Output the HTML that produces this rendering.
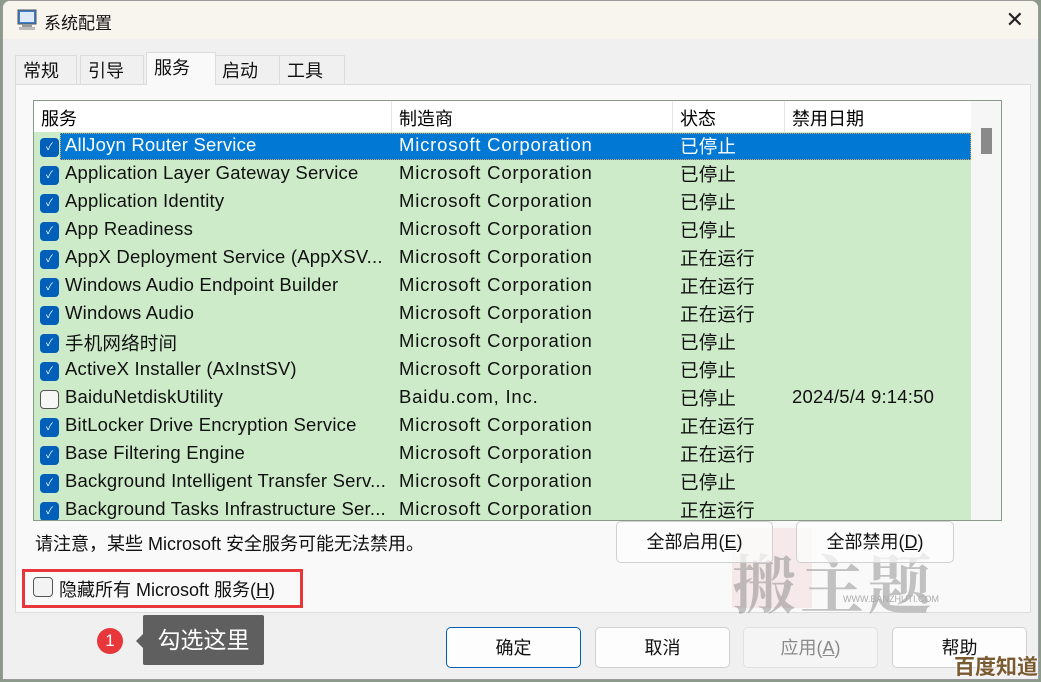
<!DOCTYPE html>
<html><head><meta charset="utf-8"><style>
*{margin:0;padding:0;box-sizing:border-box}
body{width:1041px;height:682px;overflow:hidden;background:#8c9a8c;font-family:"Liberation Sans","Noto Sans CJK SC",sans-serif;position:relative}
.win{position:absolute;left:2px;top:0;width:1037px;height:680px;background:#f0f0f0;border:1px solid #9a9a9a;border-radius:8px 8px 0 0;overflow:hidden}
.title{position:absolute;left:0;top:0;width:100%;height:38px;background:#f8f5ef}
.title span{position:absolute;left:41px;top:8px;font-size:17px;color:#111}
.x{position:absolute;right:14px;top:6px;font-size:22px;color:#222}
.tab{position:absolute;top:54px;height:30px;background:#f0f0f0;border:1px solid #dcdcdc;border-bottom:none;font-size:18px;padding:1px 0 0 7px;color:#111}
.panel{position:absolute;left:12px;top:83px;width:1016px;height:529px;background:#f9f9f9;border:1px solid #dcdcdc}
.list{position:absolute;left:33px;top:100px;width:969px;height:421px;border:1px solid #8a9a8a;background:#cdebc9;overflow:hidden}
.hdr{position:absolute;left:0;top:0;width:937px;height:31px;background:#fff}
.hdr div{position:absolute;top:0;height:31px;border-right:1px solid #e5e5e5;font-size:18px;padding:4px 0 0 7px}
.sb{position:absolute;left:937px;top:0;width:31px;height:421px;background:#f6f6f6}
.thumb{position:absolute;left:10px;top:27px;width:11px;height:26px;background:#8a8a8a}
.row{position:absolute;left:0;width:937px;height:28px;font-size:18.5px;color:#111;letter-spacing:0.2px}
.row span{position:absolute;top:1px;white-space:nowrap}
.row span.m{letter-spacing:0.8px}
.row span.s{top:0}
.cb{position:absolute;left:6px;top:5px;width:19px;height:19px;border-radius:4px;background:#005fb8;color:#fff;font-size:10px;text-align:center;line-height:19px}
.cb.off{background:#f6f6f6;border:1px solid #555}
.sel{position:absolute;left:26px;top:0;width:911px;height:27px;background:#0078d4;border:1px dotted #e0a060}
.btn{position:absolute;height:42px;background:#fdfdfd;border:1px solid #d0d0d0;border-radius:5px;font-size:18px;text-align:center;line-height:40px;color:#111}
</style></head><body>
<div class="win">
<div class="title">
<svg style="position:absolute;left:13px;top:8px" width="22" height="22" viewBox="0 0 22 22"><rect x="2" y="1" width="18" height="14" fill="#3a7fd0" stroke="#555"/><rect x="4" y="3" width="14" height="10" fill="#dfeaf8"/><rect x="6" y="15" width="10" height="3" fill="#999"/><rect x="3" y="18" width="16" height="3" fill="#bbb"/></svg>
<span>系统配置</span><div class="x">✕</div></div>
<div class="tab" style="left:12px;width:62px">常规</div>
<div class="tab" style="left:77px;width:64px">引导</div>
<div class="tab" style="left:143px;top:51px;height:33px;width:70px;background:#f9f9f9;z-index:2">服务</div>
<div class="tab" style="left:211px;width:66px">启动</div>
<div class="tab" style="left:276px;width:66px">工具</div>
<div class="panel"></div>
</div>
<div class="list">
<div class="hdr"><div style="left:0;width:358px">服务</div><div style="left:358px;width:281px">制造商</div><div style="left:639px;width:112px">状态</div><div style="left:751px;width:186px;border-right:none">禁用日期</div></div>
<div class="sb"><div class="thumb"></div></div>
<div id="rows"></div>
</div>
<div style="position:absolute;left:35px;top:530px;font-size:18px;color:#111">请注意，某些 Microsoft 安全服务可能无法禁用。</div>
<div style="position:absolute;left:732px;top:528px;width:80px;height:80px;background:rgba(230,120,120,.12)"></div>
<div style="position:absolute;left:732px;top:535px;font-size:64px;color:rgba(110,110,110,.4);font-family:'Noto Serif CJK SC',serif;letter-spacing:4px;font-weight:bold">搬主题</div>
<div style="position:absolute;left:843px;top:594px;font-size:9px;color:#aaa">WWW.BANZHUTI.COM</div>
<div class="btn" style="left:616px;top:521px;width:157px;background:rgba(253,253,253,.7)">全部启用(<u>E</u>)</div>
<div class="btn" style="left:796px;top:521px;width:158px;background:rgba(253,253,253,.7)">全部禁用(<u>D</u>)</div>
<div style="position:absolute;left:22px;top:569px;width:281px;height:39px;border:3px solid #e8373b"></div>
<div style="position:absolute;left:33px;top:577px;width:20px;height:20px;border:1px solid #555;border-radius:4px;background:#f3f3f3"></div>
<div style="position:absolute;left:59px;top:576px;font-size:18px;color:#111">隐藏所有 Microsoft 服务(<u>H</u>)</div>
<div style="position:absolute;left:97px;top:628px;width:26px;height:26px;border-radius:50%;background:#e8373b;color:#fff;font-size:17px;text-align:center;line-height:26px">1</div>
<div style="position:absolute;left:117px;top:634px;width:0;height:0;border:7px solid transparent;border-right-color:#5f5f5f;margin-left:12px"></div>
<div style="position:absolute;left:143px;top:615px;width:121px;height:50px;background:#5f5f5f;border-radius:2px;color:#fff;font-size:23px;line-height:50px;text-align:center">勾选这里</div>
<div class="btn" style="left:446px;top:627px;width:135px;height:41px;border:1px solid #005fb8">确定</div>
<div class="btn" style="left:595px;top:627px;width:135px;height:41px">取消</div>
<div class="btn" style="left:743px;top:627px;width:135px;height:41px;color:#8a8a8a;background:#f5f5f5;border-color:#e0e0e0">应用(<u>A</u>)</div>
<div class="btn" style="left:892px;top:627px;width:135px;height:41px">帮助</div>
<div style="position:absolute;left:954px;top:651px;font-size:21px;font-weight:bold;color:#7a5a30;text-shadow:0 0 2px #fff,0 0 3px #fff">百度知道</div>
<script>
var d=[["AllJoyn Router Service","已停止",1,""],["Application Layer Gateway Service","已停止",1,""],["Application Identity","已停止",1,""],["App Readiness","已停止",1,""],["AppX Deployment Service (AppXSV...","正在运行",1,""],["Windows Audio Endpoint Builder","正在运行",1,""],["Windows Audio","正在运行",1,""],["手机网络时间","已停止",1,""],["ActiveX Installer (AxInstSV)","已停止",1,""],["BaiduNetdiskUtility","已停止",0,"2024/5/4 9:14:50"],["BitLocker Drive Encryption Service","正在运行",1,""],["Base Filtering Engine","正在运行",1,""],["Background Intelligent Transfer Serv...","已停止",1,""],["Background Tasks Infrastructure Ser...","正在运行",1,""]];
var h="";d.forEach(function(r,i){var m=r[0]=="BaiduNetdiskUtility"?"Baidu.com, Inc.":"Microsoft Corporation";var c=i==0?"color:#fff":"";
h+='<div class="row" style="top:'+(32+i*28)+'px;'+c+'">'+(i==0?'<div class="sel"></div>':'')+'<div class="cb'+(r[2]?'':' off')+'">'+(r[2]?'✓':'')+'</div><span style="left:31px;position:absolute">'+r[0]+'</span><span class="m" style="left:365px">'+m+'</span><span class="s" style="left:646px">'+r[1]+'</span><span style="left:758px">'+r[3]+'</span></div>';});
document.getElementById("rows").innerHTML=h;
</script>
</body></html>
